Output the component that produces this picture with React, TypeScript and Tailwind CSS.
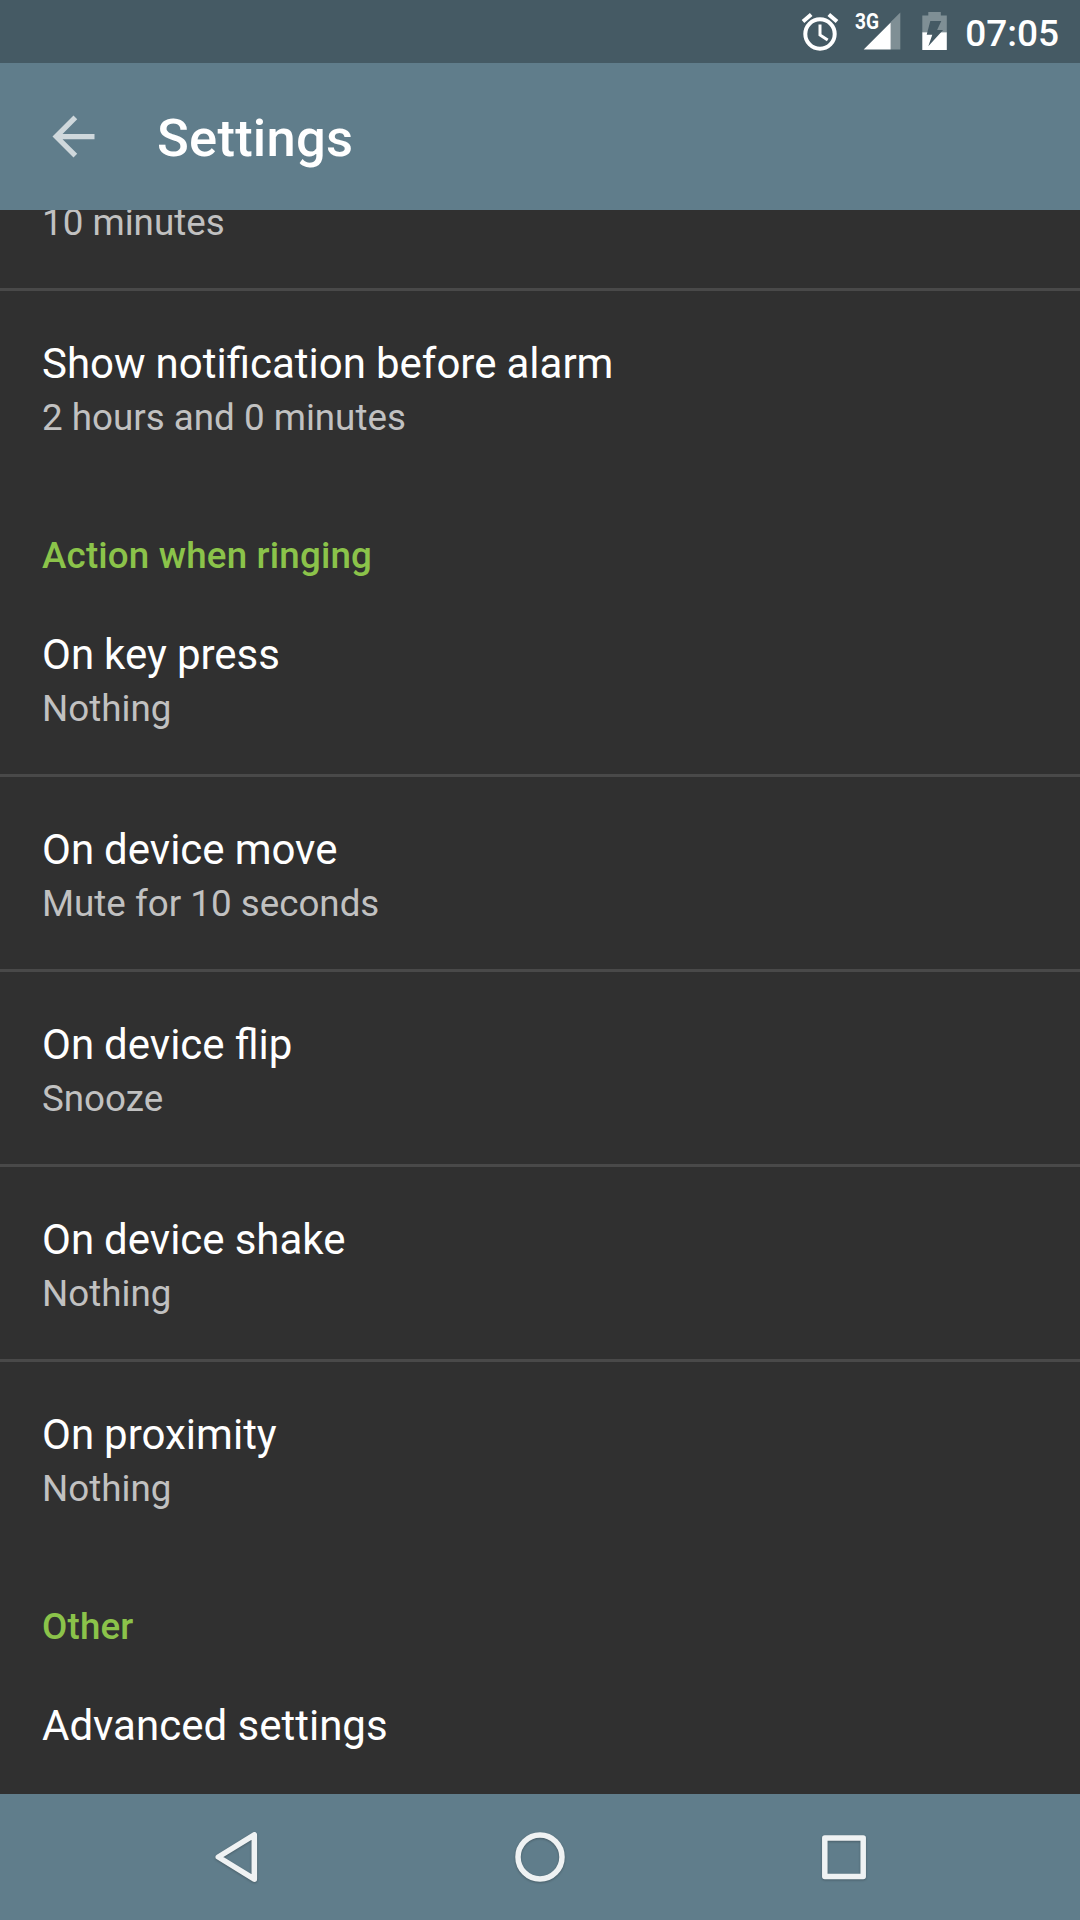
const ringingRows = [
  ['On key press', 'Nothing'],
  ['On device move', 'Mute for 10 seconds'],
  ['On device flip', 'Snooze'],
  ['On device shake', 'Nothing'],
  ['On proximity', 'Nothing'],
];

function Row({ title, sub }: { title: string; sub: string }) {
  return (
    <div className="box-content h-[192px]">
      <div className="px-[42px] pt-12">
        <div className="text-[42px] leading-[49px] [word-spacing:-0.4px] text-white">{title}</div>
        <div className="mt-[2px] text-[36.75px] leading-[56px] text-[#c1c1c1]">{sub}</div>
      </div>
    </div>
  );
}

function SectionTitle({ children }: { children: string }) {
  return (
    <div className="h-[99px] px-[42px] pt-[51px] text-[36.75px] leading-[44px] font-medium tracking-[0.17px] text-[#8bc34a]">
      {children}
    </div>
  );
}

export default function App() {
  return (
    <div className="flex h-[1920px] w-[1080px] flex-col overflow-hidden bg-[#303030] font-['Roboto',sans-serif]">
      <div className="flex h-[63px] shrink-0 items-center justify-end bg-[#455a64] pr-[21px] text-white">
        <svg width="150" height="63" viewBox="799 0 150 63" className="mr-4 shrink-0">
          <g fill="none" stroke="#fff" strokeWidth="4">
            <circle cx="820" cy="34" r="14.7" />
            <path d="M820 24.5v10.5l7.7 5" strokeWidth="3" />
            <path d="M803 21.5l8.2-7M837 21.5l-8.2-7" />
          </g>
          <path d="M900.3 12.5v37h-9.6V22.1z" fill="#7f8f95" />
          <path d="M890.7 22.5v27h-27z" fill="#fff" />
          <text x="855" y="29.2" fill="#fff" fontSize="22" fontWeight="700" textLength="24" lengthAdjust="spacingAndGlyphs">3G</text>
          <path d="M922.3 15.5h6v-3.5h12.5v3.5h6v17h-24.5z" fill="#7f8f95" />
          <path d="M922.3 32.3h24.5V50h-24.5z" fill="#fff" />
          <path d="M930.3 21h11l-4.2 9h6l-14.8 16.2 4-11.4h-5.6z" fill="#455a64" />
        </svg>
        <span className="pt-[4px] text-[37px] font-medium">07:05</span>
      </div>
      <header className="flex h-[147px] shrink-0 items-center bg-[#607d8b] pl-[42px]">
        <svg width="63" height="63" viewBox="0 0 24 24" fill="#cfd8dc"><path d="M20 11H7.83l5.59-5.59L12 4l-8 8 8 8 1.41-1.41L7.83 13H20v-2z" /></svg>
        <h1 className="ml-[52px] pt-[4px] text-[52.5px] font-medium tracking-[0.25px] text-white">Settings</h1>
      </header>
      <main className="h-[1584px] shrink-0 overflow-hidden">
        <div className="h-[81px] border-b-[3px] border-[#494949] px-[42px] text-[36.75px] leading-[26px] text-[#c1c1c1]">10 minutes</div>
        <Row title="Show notification before alarm" sub="2 hours and 0 minutes" />
        <SectionTitle>Action when ringing</SectionTitle>
        <div className="divide-y-[3px] divide-[#494949]">
          {ringingRows.map(([title, sub]) => <Row key={title} title={title} sub={sub} />)}
        </div>
        <SectionTitle>Other</SectionTitle>
        <div className="px-[42px] pt-12 text-[42px] leading-[49px] text-white">Advanced settings</div>
      </main>
      <nav className="flex h-[126px] shrink-0 items-center bg-[#607d8b]">
        <svg width="1080" height="126" fill="none" stroke="#eff2f3" strokeWidth="5.5" strokeLinejoin="round" className="drop-shadow-[0_1px_1px_rgba(0,0,0,0.25)]">
          <path d="M254.3 40.8v44.4l-36-22.2z" />
          <circle cx="540" cy="63" r="22" />
          <rect x="824.8" y="44" width="38.4" height="38.4" />
        </svg>
      </nav>
    </div>
  );
}
